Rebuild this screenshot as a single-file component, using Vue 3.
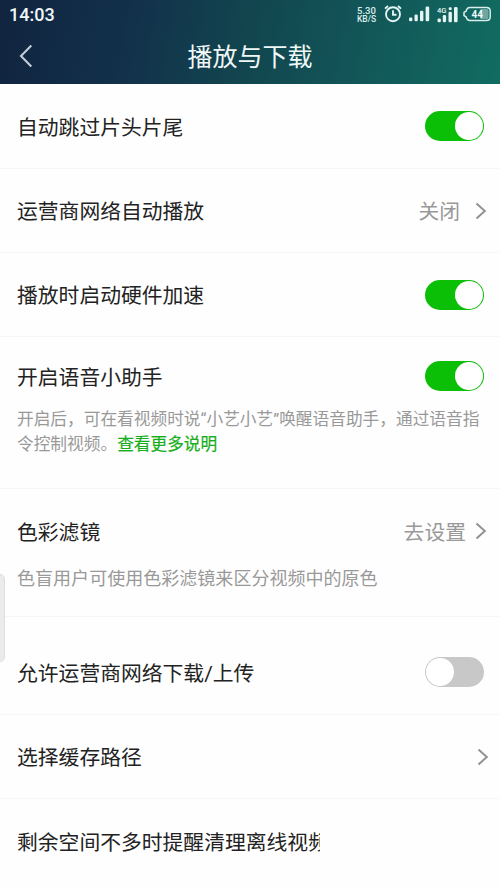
<script setup>
const rows = [
  { title: '自动跳过片头片尾', height: 85, toggle: true, on: true },
  { title: '运营商网络自动播放', height: 84, value: '关闭', arrow: true },
  { title: '播放时启动硬件加速', height: 84, toggle: true, on: true },
  {
    title: '开启语音小助手', height: 152, toggle: true, on: true, kind: 'voice',
    note: '开启后，可在看视频时说“小艺小艺”唤醒语音助手，通过语音指令控制视频。', link: '查看更多说明',
  },
  {
    title: '色彩滤镜', height: 128, value: '去设置', arrow: true, kind: 'filter',
    note: '色盲用户可使用色彩滤镜来区分视频中的原色',
  },
  { title: '允许运营商网络下载/上传', height: 98, toggle: true, on: false, kind: 'download' },
  { title: '选择缓存路径', height: 84, arrow: true, kind: 'path' },
  { title: '剩余空间不多时提醒清理离线视频', height: 90, kind: 'clipped' },
]
</script>

<template>
  <div class="screen">
    <header class="header">
      <div class="status">
        <span class="time">14:03</span>
        <div class="indicators">
          <div class="speed"><span>5.30</span><span>KB/S</span></div>
          <svg class="alarm" width="18" height="18" viewBox="0 0 18 18" fill="none" stroke="#e4f5f3" stroke-width="1.9">
            <circle cx="9" cy="9.2" r="7" />
            <path d="M9 5.200v4.500h3.500M1 3.600 4 1M14 1l3 2.600" />
          </svg>
          <svg class="signal" width="21" height="16" viewBox="0 0 21 16" fill="#e4f5f3">
            <rect x="0" y="11.500" width="3.400" height="3.800" rx="1.300" />
            <rect x="5.500" y="8.500" width="3.300" height="6.800" rx="1.300" />
            <rect x="11" y="4.800" width="3.400" height="10.500" rx="1.300" />
            <rect x="16.600" y="0.500" width="3.600" height="14.800" rx="1.300" />
          </svg>
          <svg class="signal-4g" width="22" height="17" viewBox="0 0 22 17" fill="#e4f5f3">
            <text x="0" y="7" font-size="7.600" font-weight="500">4G</text>
            <rect x="0.500" y="12.500" width="3.400" height="3.800" rx="1.300" />
            <rect x="5.800" y="9" width="3.300" height="7.300" rx="1.300" />
            <rect x="11.500" y="5.800" width="3.400" height="10.500" rx="1.300" />
            <rect x="11.700" y="1.300" width="3" height="2.800" rx="1.200" />
            <rect x="17" y="1" width="3.600" height="15.300" rx="1.300" />
          </svg>
          <svg class="battery" width="29" height="16" viewBox="0 0 29 16">
            <rect x="17" y="3" width="8.500" height="10" rx="1.500" fill="#6da7a3" />
            <path d="M7 1.500h16.500Q27.200 1.500 27.200 5v6q0 3.500-3.700 3.500H7Q4 14.500 3 10.800L1 9.600V6.400L3 5.200Q4 1.500 7 1.500Z" fill="none" stroke="#d9efed" stroke-width="1.500" />
            <text x="8.500" y="11.600" font-size="10" font-weight="700" fill="#eefaf8">44</text>
          </svg>
        </div>
      </div>
      <div class="nav">
        <svg class="back" width="14" height="24" viewBox="0 0 14 24" fill="none" stroke="#c1cdd6" stroke-width="2.1">
          <path d="M12.300 1.500 2 12l10.300 10.500" />
        </svg>
        <h1>播放与下载</h1>
      </div>
    </header>

    <main>
      <section v-for="row in rows" :key="row.title" class="row" :class="row.kind" :style="{ height: row.height + 'px' }">
        <div class="main-line">
          <span class="title">{{ row.title }}</span>
          <span v-if="row.toggle" class="switch" :class="{ on: row.on }"><i></i></span>
          <span v-else-if="row.arrow" class="action">
            <span class="value">{{ row.value }}</span>
            <svg width="12" height="18" viewBox="0 0 12 18" fill="none" stroke="#929292" stroke-width="2">
              <path d="m1.500 1.500 8.300 7.500-8.300 7.500" />
            </svg>
          </span>
        </div>
        <p v-if="row.note" class="note">{{ row.note }}<b v-if="row.link">{{ row.link }}</b></p>
      </section>
    </main>
    <div class="edge-handle"></div>
  </div>
</template>

<style>
body { margin: 0; background: #fefefe; }
</style>

<style scoped>
* { box-sizing: border-box; }
.screen {
  position: relative;
  width: 500px;
  height: 889px;
  overflow: hidden;
  background: #fefefe;
  color: #222;
  font-family: Roboto, "Noto Sans CJK SC", sans-serif;
}
.header {
  height: 84px;
  background: linear-gradient(100deg, #11243f 0%, #12304a 25%, #12464f 50%, #12595a 76%, #116c60 100%);
}
.status {
  height: 28px;
  padding: 0 8px 0 9px;
  display: flex;
  align-items: center;
  justify-content: space-between;
}
.time { padding-top: 1px; color: #f0f7fa; font-size: 18px; line-height: 27px; font-weight: 500; }
.indicators { display: flex; align-items: center; }
.speed {
  display: flex;
  flex-direction: column;
  align-items: center;
  width: 21px;
  margin-right: 7px;
  color: #d9efed;
  font-size: 8.500px;
  font-weight: 500;
}
.speed span { line-height: 8px; }
.speed span:first-child { font-size: 9.500px; line-height: 9px; }
.alarm { margin-right: 7px; }
.signal { margin-right: 7px; }
.signal-4g { margin-right: 4px; }
.nav {
  height: 56px;
  padding-left: 19px;
  display: grid;
  grid-template-columns: 14px 1fr 33px;
  align-items: center;
}
h1 {
  margin: 0;
  padding-top: 4px;
  text-align: center;
  color: #f0f7f8;
  font-size: 25px;
  line-height: 36px;
  font-weight: 400;
}
.row { padding: 0 16px 0 17px; border-bottom: 1px solid #f7f7f7; }
.main-line { height: 100%; display: flex; align-items: center; justify-content: space-between; }
.title { padding-top: 3px; font-size: 20.800px; line-height: 30px; white-space: nowrap; }
.switch {
  width: 59px;
  height: 30px;
  padding: 1px;
  flex: none;
  display: flex;
  border-radius: 15px;
  background: #c8c8c8;
}
.switch i { width: 28px; height: 28px; border-radius: 50%; background: #fff; }
.switch.on { justify-content: flex-end; background: #0bbe06; }
.action { display: flex; align-items: center; gap: 15px; margin-right: -3px; color: #999; font-size: 20.800px; line-height: 30px; }
.value { padding-top: 3px; }
.voice { padding-top: 12px; }
.voice .main-line { height: 54px; }
.filter { padding-top: 15px; }
.filter .main-line { height: 54px; }
.filter .action { gap: 9px; }
.note { margin: 0; color: #999; font-size: 16.700px; line-height: 25px; }
.voice .note { margin: 4px -3px 0 0; }
.note b { color: #16ae1a; font-weight: 400; -webkit-text-stroke: 0.200px #16ae1a; }
.filter .note { margin-top: 7px; font-size: 18.050px; line-height: 27px; }
.download .main-line { padding-top: 13px; }
.path .action { margin-right: -5px; }
.clipped { width: 320px; overflow: hidden; border: 0; padding-right: 0; }
.clipped .main-line { height: 84px; }
.edge-handle {
  position: absolute;
  left: -5px;
  top: 574px;
  width: 10px;
  height: 88px;
  border: 1px solid #dedede;
  border-radius: 5px;
  background: #ebebeb;
}
</style>
